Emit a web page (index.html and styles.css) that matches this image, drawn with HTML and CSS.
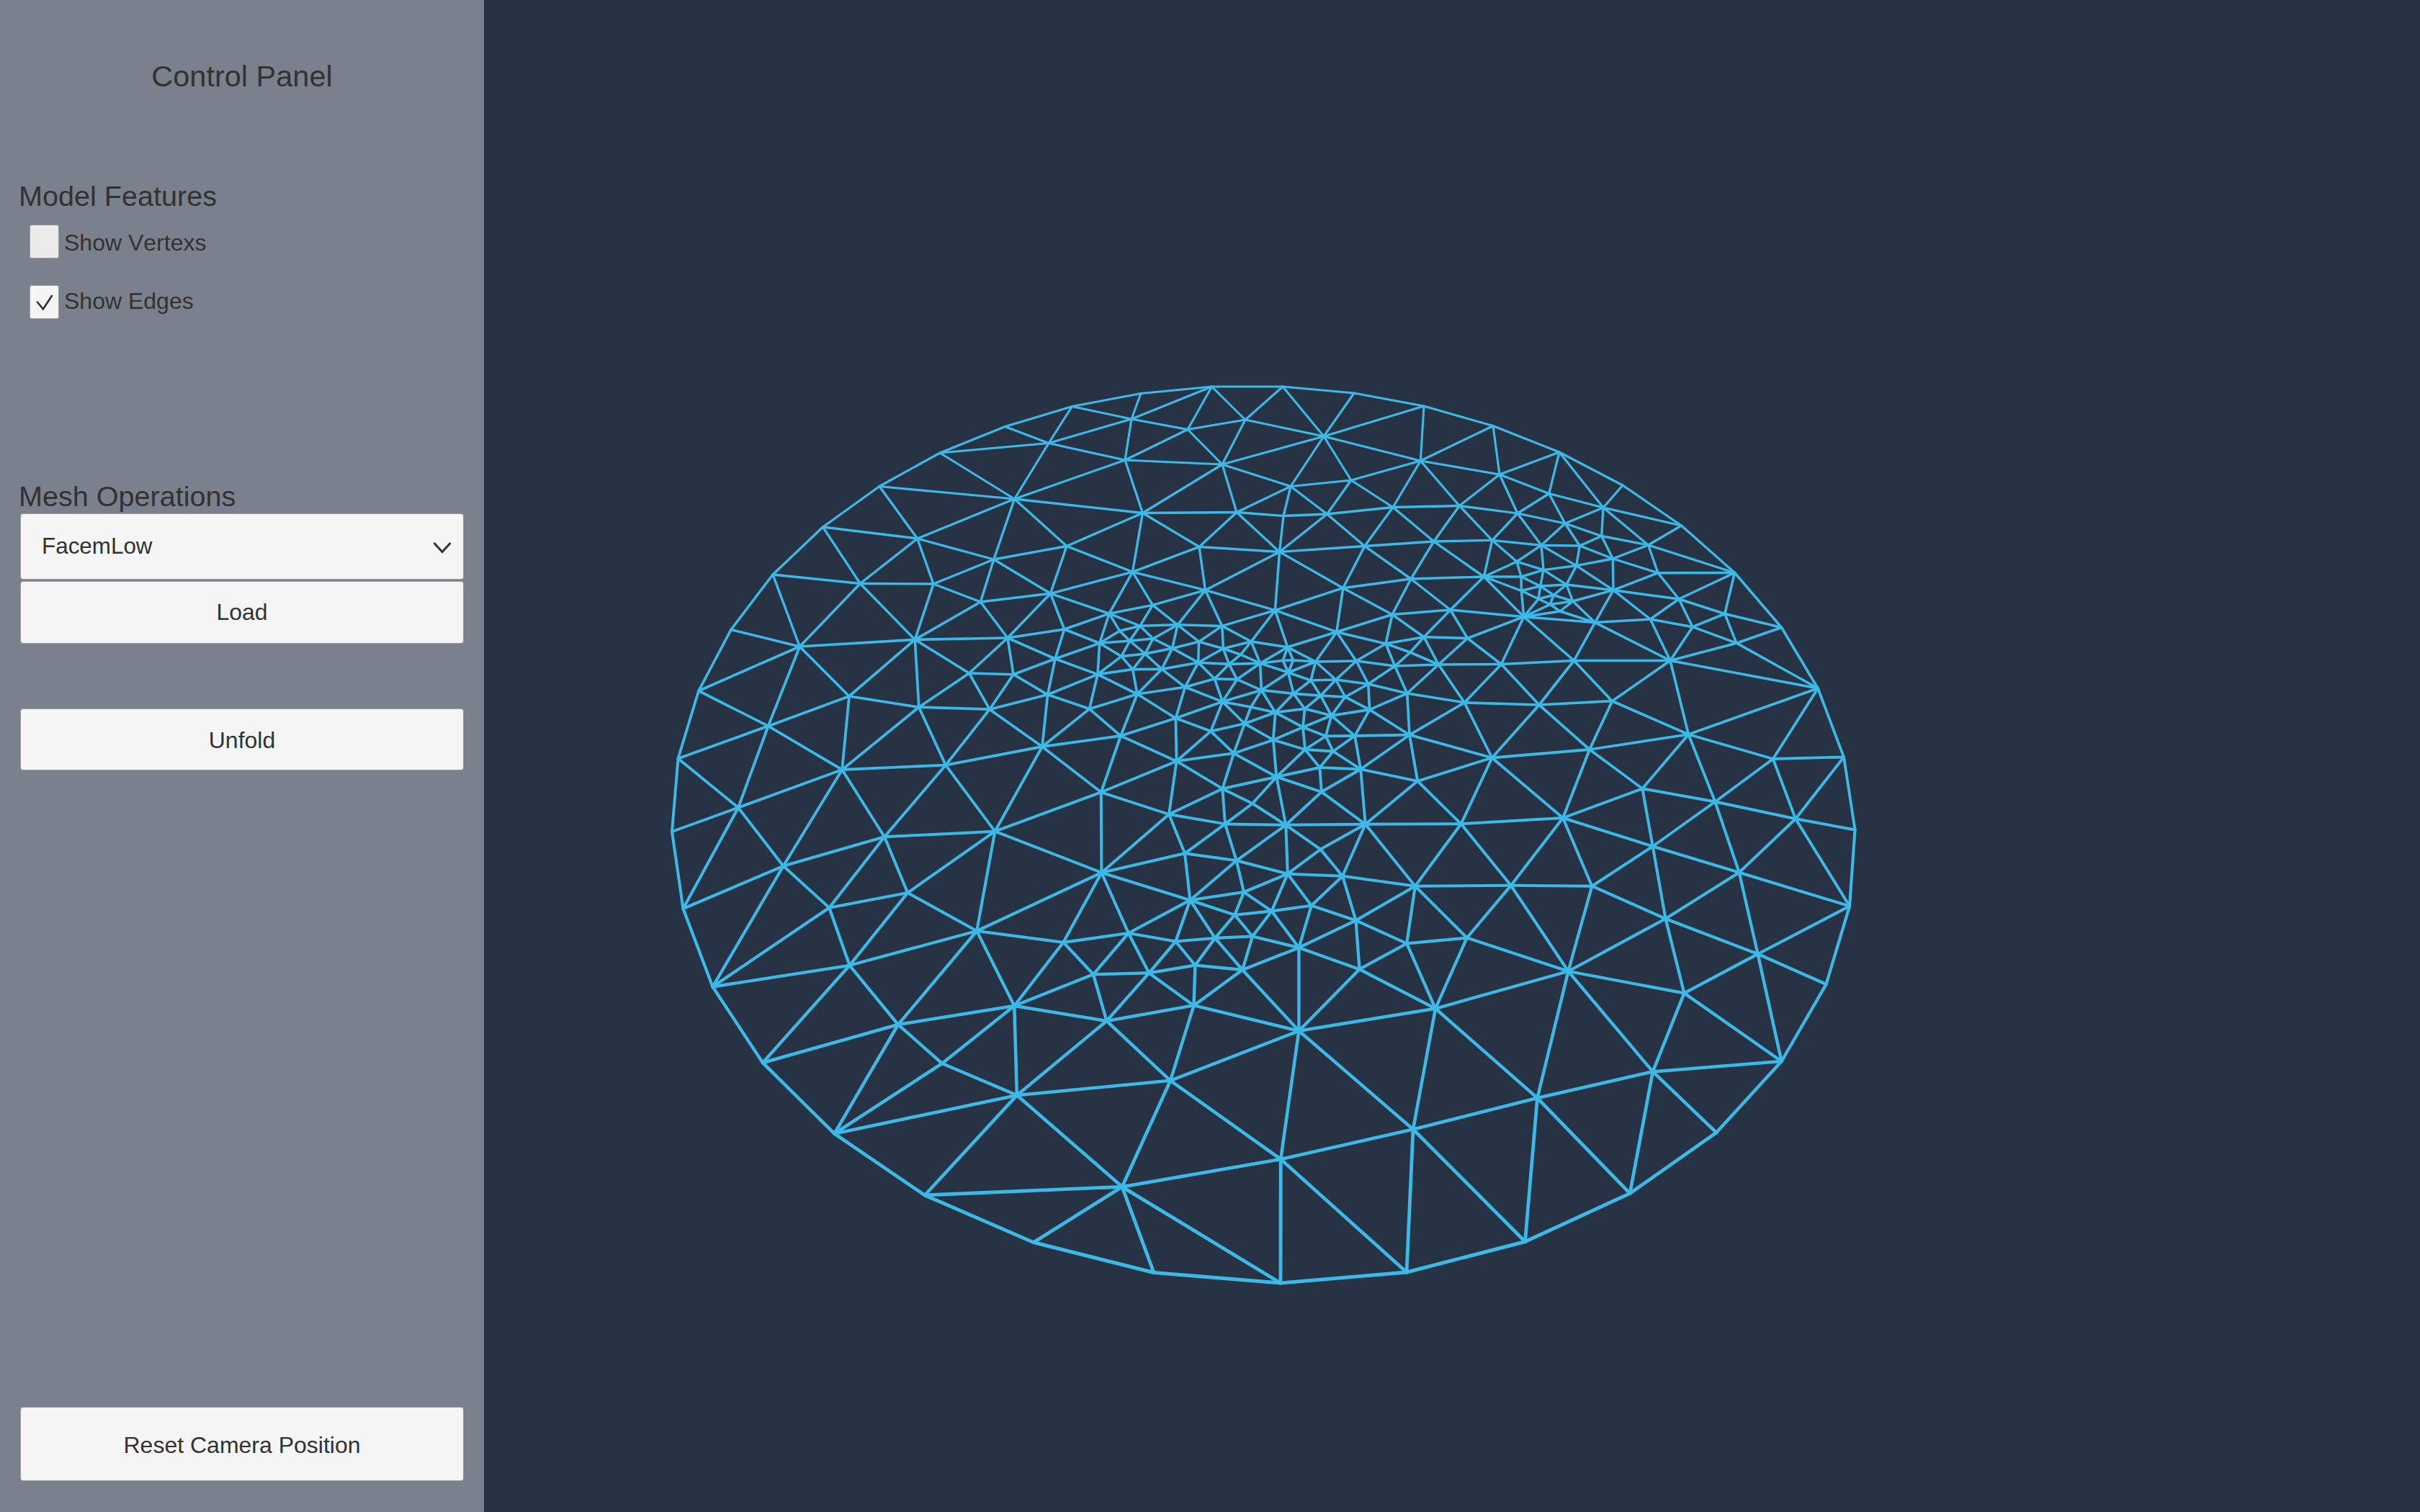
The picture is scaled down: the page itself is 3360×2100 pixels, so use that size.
FILE: index.html
```html
<!DOCTYPE html>
<html lang="en">
<head>
<meta charset="utf-8">
<title>Mesh Viewer</title>
<link rel="stylesheet" href="styles.css">
</head>
<body>
<div class="app">
  <aside class="panel">
    <h1 class="panel-title">Control Panel</h1>

    <section class="features">
      <h2 class="section-title">Model Features</h2>
      <label class="toggle toggle-vertices"><span class="box"></span><span class="toggle-label">Show Vertexs</span></label>
      <label class="toggle toggle-edges"><span class="box box-on"><svg class="check" viewBox="0 0 40 46"><path d="M9.5 22.3 L18.3 33 L31.3 13.2"/></svg></span><span class="toggle-label">Show Edges</span></label>
    </section>

    <section class="operations">
      <h2 class="section-title">Mesh Operations</h2>
      <div class="control dropdown"><span>FacemLow</span><svg class="chevron" viewBox="0 0 28 20"><path d="M2.5 4 L14 16.5 L25.5 4"/></svg></div>
      <button class="control load">Load</button>
      <button class="control unfold">Unfold</button>
    </section>

    <button class="control reset">Reset Camera Position</button>
  </aside>
  <main class="viewport">
    <svg class="mesh" id="mesh" viewBox="672 0 2688 2100"></svg>
  </main>
</div>
<script src="mesh.js"></script>
</body>
</html>
```
FILE: styles.css
```css
* { box-sizing: border-box; }
body {
  margin: 0;
  font-family: "Liberation Sans", Arial, sans-serif;
  font-kerning: none;
  color: #323232;
  background: #273244;
}
.app { display: flex; width: 3360px; height: 2100px; }
.panel {
  display: flex;
  flex-direction: column;
  width: 672px;
  padding: 82px 28px 43px;
  background: #7b818c;
}
.panel-title {
  margin: 0;
  font-size: 41.5px;
  font-weight: 400;
  line-height: 48px;
  text-align: center;
}
.section-title {
  margin: 0 0 0 -2px;
  font-size: 39.6px;
  font-weight: 400;
  line-height: 46px;
}
.features { margin-top: 119px; }
.toggle { display: flex; gap: 7px; height: 47px; margin-left: 13px; font-size: 32px; line-height: 46px; }
.toggle-vertices { margin-top: 17px; }
.toggle-vertices .toggle-label { padding-top: 2px; }
.toggle-edges { margin-top: 37px; }
.toggle-edges .toggle-label { margin-top: -1px; }
.box {
  width: 41px;
  height: 47px;
  border: 1px solid #989a9e;
  border-radius: 3px;
  background: #ebebeb;
}
.box-on { background: #f5f5f5; }
.check { display: block; width: 39px; height: 45px; }
.check path, .chevron path { fill: none; stroke: #323232; stroke-width: 2.6; }
.operations { display: flex; flex-direction: column; margin-top: 223px; }
.control {
  display: flex;
  align-items: center;
  justify-content: center;
  width: 616px;
  padding: 0;
  border: 1px solid #989a9e;
  border-radius: 4px;
  background: #f5f5f5;
  color: #323232;
  font-family: inherit;
  font-kerning: inherit;
  font-size: 32px;
  line-height: 36px;
}
.dropdown { justify-content: space-between; height: 92px; margin-top: 1px; padding: 0 15px 0 29px; font-size: 31.4px; }
.chevron { width: 28px; height: 20px; margin-top: 2px; }
.chevron path { stroke-width: 3; }
.load { height: 87px; margin-top: 2px; padding-bottom: 2px; }
.unfold { height: 86px; margin-top: 90px; padding-top: 2px; }
.reset { height: 103px; margin-top: auto; padding-top: 2px; }
.viewport { flex: 1; }
.mesh { display: block; width: 2688px; height: 2100px; }
.mesh line { stroke: #3cb9e6; stroke-linecap: round; }
```
FILE: mesh.js
```js
// Outer ring of the flattened mesh, clockwise: x, y, inner neighbours.
const ring = [
  [1682.5, 537, "a1 a2 a3"], [1781, 537, "a3 a4"], [1880, 546, "a4"], [1977, 564, "a4 b1"],
  [2073, 591.5, "b1 b2"], [2165, 628, "b2 b3 b4"], [2253, 674, "b4"], [2334.5, 730, "b4 b10"],
  [2408.5, 795.5, "b10 b34 b35 b38"], [2473.5, 871.5, "b38 b39"], [2524, 956, "b39 b40 c20 c21"],
  [2560, 1051.5, "c21 c25"], [2575.5, 1152.5, "c25"], [2568, 1258.5, "c25 c29 c34"],
  [2535.5, 1367, "c34"], [2473.5, 1474, "c34 c35 c37"], [2383, 1573, "c37"], [2263, 1657.5, "c37 c38"],
  [2117.5, 1724.5, "c38 c39"], [1953, 1767, "c39 c40"], [1778, 1782, "c40 c41"], [1602, 1767.5, "c41"],
  [1435, 1725.5, "c41"], [1284, 1660, "c41 c51"], [1158.5, 1574.5, "c51 g30 g29"],
  [1059, 1476, "g29 g27"], [989.5, 1370.5, "g27 g22 g19"], [948.5, 1262, "g19 g18"],
  [933, 1155, "g18"], [941.5, 1053.5, "g18 g14"], [970, 959.5, "g14 g8"], [1015, 874.5, "g8"],
  [1073, 798, "g8 g3"], [1142.5, 732, "g3 g1"], [1221, 675.5, "g1 a8"], [1305, 629, "a8 a5"],
  [1395.5, 592.5, "a5"], [1488.5, 564.5, "a5 a1"], [1584, 546.5, "a1"]
];

// Inner vertices: x, y, neighbours.
const inner = {
  a1: [1571, 582, "a2 a6 a5"], a2: [1649, 596.5, "a3 a6 a7"], a3: [1729, 583, "a4 a7"],
  a4: [1838, 606, "b1 a7 a11 a12"], a5: [1456, 615.5, "a6 a8"], a6: [1562, 639, "a7 a8 a9"],
  a7: [1697, 645, "a9 a10 a11"], a8: [1408.5, 693, "a9 a17 g1 g2"], a9: [1586.5, 712.5, "a10 a15 a17 a18"],
  a10: [1717, 711.5, "a11 a14 a15 a16"], a11: [1792, 675.5, "a12 a13 a14"], a12: [1876, 667, "a13 b1 b5"],
  a13: [1842.5, 714, "a14 a16 b5 b11"], a14: [1782, 716.5, "a16"], a15: [1665, 759.5, "a16 a18 a20"],
  a16: [1776.5, 766.5, "a20 a21 b11 e1"], a17: [1481, 758.5, "g2 a18 a19"], a18: [1572.5, 794.3, "a19 a20 f1 f2"],
  a19: [1458.5, 824.3, "g2 g5 g7 f1 f17"], a20: [1673.5, 819.7, "f2 f4 e3 e1"], a21: [1864.7, 816.7, "b11 b21 c1 e1 e2"],
  b1: [1972.3, 640, "b2 b5 b6"], b2: [2082, 659, "b3 b6 b7"], b3: [2150.7, 685.5, "b4 b7 b8"],
  b4: [2226, 705, "b8 b9 b10"], b5: [1934, 704.5, "b6 b11 b12"], b6: [2026.3, 702.5, "b7 b12 b13"],
  b7: [2107, 713, "b8 b13 b14"], b8: [2173, 727, "b9 b14 b15"], b9: [2223.7, 744.5, "b10 b15 b16"],
  b10: [2288.5, 757, "b16 b34"], b11: [1894.7, 758.5, "b12 b21"], b12: [1990.7, 752, "b13 b20 b21"],
  b13: [2071.7, 750.3, "b14 b17 b20"], b14: [2140, 757.3, "b15 b17 b18 b19"], b15: [2193.3, 758, "b16 b19"],
  b16: [2239.3, 776, "b19 b33 b34"], b17: [2106, 780, "b18 b20 b22"], b18: [2143, 791.6, "b19 b22 b24 b25"],
  b19: [2188.6, 785.6, "b25 b33"], b20: [2060.3, 801, "b21 b22 b23 b31 c2"], b21: [1959, 804, "c1 c2"],
  b22: [2112, 801, "b23 b24"], b23: [2112.3, 820.5, "b24 b27 b31"], b24: [2138.7, 814, "b25 b26 b27"],
  b25: [2175, 812, "b26 b29 b33"], b26: [2157, 826.5, "b27 b28 b29"], b27: [2136, 831.8, "b28 b31"],
  b28: [2152.3, 839.5, "b29 b30 b31"], b29: [2183.7, 835, "b30 b32 b33"], b30: [2166, 849, "b31 b32"],
  b31: [2115.7, 856.7, "b32 c2 c5 c9 c10"], b32: [2214.5, 864.6, "b33 b36 b40 c10"], b33: [2240, 819.7, "b34 b35 b36"],
  b34: [2302, 795.7, "b35"], b35: [2331, 832, "b36 b37 b38"], b36: [2291.3, 860, "b37 b40"],
  b37: [2350, 870.7, "b38 b39 b40"], b38: [2394.7, 852.5, "b39"], b39: [2411, 893.2, "b40"],
  b40: [2319, 917.5, "c10 c15 c20"],
  c1: [1933, 853.5, "c2 c3 c4 e2"], c2: [2013.7, 847, "c4 c5"], c3: [1924, 894, "e2 e16 c4 c6 c7"],
  c4: [1977, 884.7, "c5 c6 c8"], c5: [2037.5, 886.5, "c8 c9"], c6: [1958, 906, "c7 c8"],
  c7: [1936.7, 925, "e16 c8 c11 c12"], c8: [1997.3, 923, "c9 c12 c13"], c9: [2084.4, 922.5, "c10 c13 c14"],
  c10: [2185.3, 917.5, "c14 c15"], c11: [1899.8, 950, "e16 e20 e26 c12 c16"], c12: [1953.7, 963, "c13 c16 c17"],
  c13: [2033.3, 975.8, "c14 c17 c18"], c14: [2137, 979, "c15 c18 c19"], c15: [2238.4, 973.7, "c19 c20"],
  c16: [1901.5, 985.6, "e26 e30 d7 c17"], c17: [1957, 1020.7, "d7 d9 c18 c22"], c18: [2071.5, 1052.5, "c19 c22 c26 c27"],
  c19: [2207, 1041, "c20 c23 c27"], c20: [2344.3, 1020, "c21 c23 c24"], c21: [2461.7, 1054, "c24 c25"],
  c22: [1968.2, 1084.8, "d9 d17 c26"], c23: [2280.3, 1095.3, "c24 c27 c28"], c24: [2381.3, 1113.5, "c25 c28 c29"],
  c25: [2493, 1137.2, "c29"], c26: [2028.6, 1144.3, "d17 c27 c30 c31"], c27: [2170, 1136, "c28 c31 c32"],
  c28: [2294.7, 1175.5, "c29 c32 c33"], c29: [2414.7, 1211.7, "c33 c34"], c30: [1964.8, 1230.7, "d17 d22 c46 c44 c43 c31"],
  c31: [2097.8, 1229.8, "c32 c43 c36"], c32: [2210.3, 1230.7, "c33 c36"], c33: [2312.5, 1276, "c34 c35 c36"],
  c34: [2440.6, 1325, "c35"], c35: [2338.4, 1379.4, "c36 c37"], c36: [2177.4, 1349, "c37 c38 c42 c43"],
  c37: [2294.8, 1488.4, "c38"], c38: [2134.5, 1525, "c39 c42"], c39: [1962, 1568.5, "c40 c42 c47"],
  c40: [1778.2, 1610, "c41 c47 c49"], c41: [1558, 1648.3, "c49 c51"], c42: [1993, 1400.8, "c43 c44 c45 c47"],
  c43: [2036.7, 1302.5, "c44"], c44: [1953.2, 1310.3, "c45 c46"], c45: [1887.5, 1346.2, "c46 c47 c48"],
  c46: [1882.5, 1278.4, "c48 d22 d27"], c47: [1803.4, 1431.8, "c48 c49 c50 c54"], c48: [1803.4, 1316.2, "d27 d26 d30 c54"],
  c49: [1625, 1500.8, "c50 c51 c52"], c50: [1657.5, 1396.4, "c52 c54 c55 c56"], c51: [1411.9, 1521.2, "c52 c53 g30"],
  c52: [1536.5, 1418, "c53 c56 c57"], c53: [1408.3, 1397, "c57 g28 g26 g29 g30"], c54: [1725, 1347, "c55 d29 d30"],
  c55: [1659.4, 1340.7, "c56 d28 d29"], c56: [1595.3, 1351.4, "c57 d28 d31"], c57: [1518, 1353.3, "g28 d31"],
  d1: [1633.5, 1057.2, "f16 h1 g24 e32 d2 d14 d11"], d2: [1713, 1046.2, "e31 e32 d3 d10 d11"],
  d3: [1767.8, 1027.7, "e28 e31 e33 d4 d10"], d4: [1812, 1041, "d5 d6 d8 d10 e33"], d5: [1851, 1043.5, "d6 d7 d8 d9"],
  d6: [1840.7, 1022.3, "e33 e30 d7"], d7: [1881, 1022, "e30 d9"], d8: [1832.3, 1066, "d9 d10 d13"],
  d9: [1889.2, 1068.3, "d13 d17"], d10: [1772.3, 1079, "d11 d12 d13 d16"], d11: [1697.3, 1095.4, "d12 d14 d15"],
  d12: [1739, 1116, "d15 d16"], d13: [1834.8, 1099.8, "d16 d17"], d14: [1623, 1131, "g24 g25 d15 d18"],
  d15: [1701, 1144.4, "d16 d18 d19"], d16: [1785.3, 1145.8, "d17 d19 d20 d21"], d17: [1895.7, 1144.8, "d21 d22"],
  d18: [1645, 1185.3, "d19 d23 g25"], d19: [1716.7, 1195.3, "d20 d23 d24"], d20: [1787.8, 1213.7, "d21 d22 d24 d26 d27"],
  d21: [1833.4, 1179.6, "d22"], d22: [1864, 1216.7, "d27"], d23: [1652.4, 1250.2, "g25 d24 d25 d28 d29 d31"],
  d24: [1727, 1239, "d25 d26"], d25: [1714.3, 1270.7, "d26 d29 d30"], d26: [1765.6, 1265.4, "d27 d30"],
  d27: [1820.8, 1257.7, ""], d28: [1632.3, 1307.5, "d29 d31"], d29: [1687, 1302.8, "d30"],
  d30: [1739, 1300.5, ""], d31: [1566.8, 1296, "g25 g28"],
  e1: [1770.4, 847.6, "e2 e3 e6 e11"], e2: [1855.8, 877.7, "e11 e15 e16"], e3: [1696.8, 869.4, "e4 e5 e6 f4"],
  e4: [1664.5, 891.2, "e5 e7 f4 f9"], e5: [1698.4, 900.8, "e6 e7 e8 e10"], e6: [1737.2, 891, "e9 e10 e11"],
  e7: [1663.7, 920.2, "e8 e17 e21 f9 f13"], e8: [1706.4, 922.4, "e9 e10 e17 e18"], e9: [1749.6, 921.2, "e10 e11 e12 e14 e18 e23"],
  e10: [1722.6, 909.2, ""], e11: [1787.7, 898.8, "e12 e13 e15"], e12: [1781.2, 917.3, "e13 e14"],
  e13: [1795.6, 917, "e14 e15"], e14: [1788.6, 934, "e15 e19 e23 e24"], e15: [1826.6, 919, "e16 e19 e20"],
  e16: [1883, 918, "e20"], e17: [1686.4, 942.8, "e18 e21 e22"], e18: [1717.6, 943.6, "e22 e23"],
  e19: [1820, 945, "e20 e24 e25"], e20: [1854.7, 944, "e25 e26"], e21: [1645.4, 954.2, "e22 f13 f15 f16"],
  e22: [1697.4, 974.6, "e23 e27 e31 e32 f16"], e23: [1751.4, 958.6, "e24 e27 e28"], e24: [1796, 963.4, "e25 e28 e29"],
  e25: [1833.6, 966.2, "e26 e29 e30"], e26: [1867.7, 968, "e30"], e27: [1736.8, 982, "e28 e31"],
  e28: [1770.7, 989.6, "e29 e31 e33"], e29: [1811.5, 984.4, "e30 e33"], e30: [1848.6, 993.8, "e33"],
  e31: [1728, 1005, "e32"], e32: [1681, 1015.6, "f16"], e33: [1809, 1010, ""],
  f1: [1540, 852.2, "f2 f3 f5 f6 f17"], f2: [1600.4, 840.4, "f3 f4"], f3: [1582.8, 869.3, "f4 f5 f7 f8"],
  f4: [1635, 867.8, "f8 f9"], f5: [1554.6, 876.3, "f6 f7"], f6: [1526.7, 893.3, "f7 f10 f14 f17 f18"],
  f7: [1568.7, 890, "f8 f10 f11"], f8: [1601, 887, "f9 f11"], f9: [1627.6, 900.4, "f11 f13"],
  f10: [1557, 911.6, "f11 f12 f14"], f11: [1589.8, 908, "f12 f13"], f12: [1572.6, 929.6, "f13 f14 f15"],
  f13: [1613, 929.4, "f15"], f14: [1524, 936.6, "f15 f18 f19 f20"], f15: [1579, 964, "f16 f20 h1"],
  f16: [1632.4, 997.5, "h1"], f17: [1477.7, 874, "f18 g7"], f18: [1465, 915, "f19 g7 g10"],
  f19: [1454.6, 964.8, "f20 g10 g13 g17"], f20: [1512.6, 984.6, "g17 h1"], h1: [1556, 1022, "g17 g24"],
  g1: [1273.7, 748, "g2 g3 g4"], g2: [1379.8, 777, "g4 g5"], g3: [1194.3, 810.5, "g4 g6 g8"],
  g4: [1296, 811, "g5 g6"], g5: [1361.4, 836, "g6 g7"], g6: [1270.3, 888.4, "g7 g8 g9 g11 g12"],
  g7: [1399, 886, "g9 g10"], g8: [1110.3, 898, "g11 g14"], g9: [1345.6, 935, "g10 g12 g13"],
  g10: [1407, 936.7, "g13"], g11: [1179, 967, "g12 g14 g15"], g12: [1275.8, 982.2, "g13 g15 g16"],
  g13: [1374, 985.2, "g16 g17"], g14: [1066.6, 1008.4, "g15 g18"], g15: [1169.2, 1069, "g16 g18 g19 g20"],
  g16: [1313, 1062.6, "g17 g20 g21"], g17: [1447, 1037, "g21 g24"], g18: [1025, 1121.7, "g19"],
  g19: [1087.6, 1202.8, "g20 g22"], g20: [1228, 1162.3, "g21 g22 g23"], g21: [1381.4, 1154.7, "g23 g24 g25 g26"],
  g22: [1151.3, 1260.7, "g23 g27"], g23: [1260.2, 1240, "g26 g27"], g24: [1528.8, 1100.3, "g25"],
  g25: [1529.4, 1212, "g26 g28"], g26: [1356.2, 1293, "g27 g28 g29"], g27: [1179.6, 1340.8, "g29"],
  g28: [1476.4, 1308.8, ""], g29: [1247, 1423, "g30"], g30: [1308, 1477, ""]
};

const svg = document.getElementById("mesh");

function edge(a, b) {
  const line = document.createElementNS("http://www.w3.org/2000/svg", "line");
  line.setAttribute("x1", a[0]);
  line.setAttribute("y1", a[1]);
  line.setAttribute("x2", b[0]);
  line.setAttribute("y2", b[1]);
  line.setAttribute("stroke-width", (3 + ((a[1] + b[1]) / 2 - 537) * 0.0016).toFixed(2));
  svg.appendChild(line);
}

ring.forEach((v, i) => {
  edge(v, ring[(i + 1) % ring.length]);
  v[2].split(" ").forEach(n => edge(v, inner[n]));
});

const drawn = new Set();
Object.keys(inner).forEach(k => {
  inner[k][2].split(" ").filter(Boolean).forEach(n => {
    const id = [k, n].sort().join("-");
    if (!drawn.has(id)) {
      drawn.add(id);
      edge(inner[k], inner[n]);
    }
  });
});
```
